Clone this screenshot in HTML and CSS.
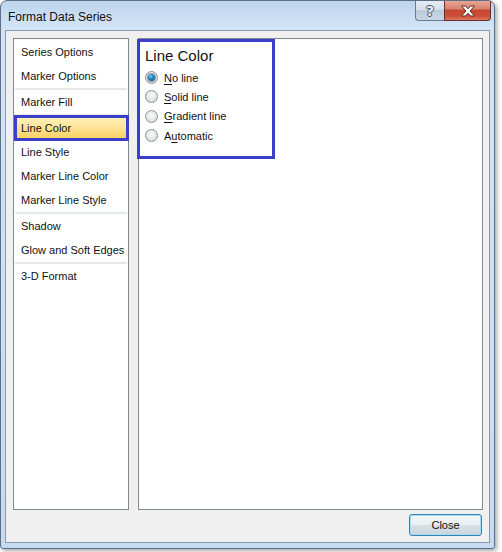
FILE: index.html
```html
<!DOCTYPE html>
<html>
<head>
<meta charset="utf-8">
<title>Format Data Series</title>
<link rel="stylesheet" href="styles.css">
</head>
<body>
<div class="window">
  <div class="titlebar">
    <span class="title">Format Data Series</span>
    <div class="caption-btns">
      <div class="cbtn help"><span class="qmark">?</span></div>
      <div class="cbtn close">
        <svg width="16" height="12" viewBox="0 0 16 12">
          <path d="M1.5 1h4l2.5 2.8L10.5 1h4l-4.5 5 4.5 5h-4L8 8.2 5.5 11h-4L6 6z" fill="#ffffff" stroke="#5a2a22" stroke-width="1" stroke-linejoin="round"/>
        </svg>
      </div>
    </div>
  </div>
  <div class="client">
    <div class="panes">
      <div class="nav">
        <div class="nav-item">Series Options</div>
        <div class="nav-item">Marker Options</div>
        <div class="nav-sep"></div>
        <div class="nav-item">Marker Fill</div>
        <div class="nav-sep"></div>
        <div class="nav-item selected">Line Color</div>
        <div class="nav-item">Line Style</div>
        <div class="nav-item">Marker Line Color</div>
        <div class="nav-item">Marker Line Style</div>
        <div class="nav-sep"></div>
        <div class="nav-item">Shadow</div>
        <div class="nav-item">Glow and Soft Edges</div>
        <div class="nav-sep"></div>
        <div class="nav-item">3-D Format</div>
      </div>
      <div class="content">
        <div class="group">
          <div class="heading">Line Color</div>
          <div class="radios">
            <div class="radio-row"><span class="radio checked"></span><span class="label"><u>N</u>o line</span></div>
            <div class="radio-row"><span class="radio"></span><span class="label"><u>S</u>olid line</span></div>
            <div class="radio-row"><span class="radio"></span><span class="label"><u>G</u>radient line</span></div>
            <div class="radio-row"><span class="radio"></span><span class="label">A<u>u</u>tomatic</span></div>
          </div>
        </div>
      </div>
    </div>
    <div class="footer">
      <button class="btn">Close</button>
    </div>
  </div>
</div>
</body>
</html>
```

FILE: styles.css
```css
* {
  box-sizing: border-box;
}

html, body {
  margin: 0;
  padding: 0;
}

body {
  background: #ffffff;
  width: 502px;
  height: 552px;
  overflow: hidden;
  font-family: "Liberation Sans", Arial, sans-serif;
  font-size: 11px;
  color: #000;
}

.window {
  width: 495px;
  height: 549px;
  border: 1px solid #5f6f84;
  border-radius: 7px 7px 3px 3px;
  background: linear-gradient(180deg, #bcd4ee 0px, #c9ddf3 14px, #d3e4f6 29px, #c6dbf2 100%);
  box-shadow: 2px 2px 4px rgba(0, 0, 0, 0.35);
  padding: 0 4px 5px 4px;
  display: flex;
  flex-direction: column;
}

.titlebar {
  height: 29px;
  display: flex;
  align-items: flex-start;
}

.title {
  font-size: 12px;
  color: #111;
  padding: 9px 0 0 3px;
  line-height: 14px;
}

.caption-btns {
  margin-left: auto;
  margin-right: -1px;
  display: flex;
  height: 20px;
}

.cbtn {
  height: 20px;
  display: flex;
  align-items: center;
  justify-content: center;
  border: 1px solid #6b7a8e;
  border-top: none;
}

.help {
  width: 29px;
  border-right: none;
  border-radius: 0 0 0 4px;
  background: linear-gradient(180deg, #e4ecf5 0%, #d4e0ec 45%, #bccbdc 50%, #c9d7e6 100%);
}

.qmark {
  font-family: "DejaVu Sans", sans-serif;
  font-weight: bold;
  font-size: 14px;
  line-height: 14px;
  color: #eef1f4;
  text-shadow: -1px 0 #48525e, 1px 0 #48525e, 0 -1px #48525e, 0 1px #48525e;
}

.close {
  width: 47px;
  border-color: #6a3027;
  border-radius: 0 0 4px 0;
  background: linear-gradient(180deg, #e8a596 0%, #d98371 40%, #c7452f 50%, #cc5038 80%, #dc7a62 100%);
}

.client {
  flex: 1;
  background: #f0f0f0;
  border: 1px solid #8a9bb0;
  padding: 7px 6px 6px 7px;
  display: flex;
  flex-direction: column;
}

.panes {
  height: 472px;
  display: flex;
  gap: 9px;
}

.nav {
  width: 116px;
  background: #fff;
  border: 1px solid #828790;
  padding-top: 1px;
}

.nav-item {
  height: 24px;
  line-height: 24px;
  padding-left: 7px;
  white-space: nowrap;
  color: #111;
}

.nav-sep {
  height: 2px;
  margin: 0 1px;
  background: #e6e9ec;
}

.nav-item.selected {
  height: 26px;
  line-height: 20px;
  margin: -1px -1px -1px 0;
  padding-left: 4px;
  border: 3px solid #3b3fcc;
  background: linear-gradient(180deg, #fff1b8 0%, #fee59a 45%, #fcd873 80%, #fbd267 100%);
}

.content {
  flex: 1;
  background: #fff;
  border: 1px solid #828790;
}

.group {
  width: 138px;
  height: 120px;
  margin-left: -2px;
  border: 3px solid #3b3fcc;
  padding: 4px 0 0 5px;
}

.heading {
  font-size: 15px;
  line-height: 20px;
  color: #141414;
}

.radios {
  padding-top: 2px;
}

.radio-row {
  height: 19.33px;
  display: flex;
  align-items: center;
}

.radio {
  width: 13px;
  height: 13px;
  border-radius: 50%;
  border: 1px solid #8d9399;
  background: radial-gradient(circle at 50% 40%, #fbfbfb 0%, #eaeaea 45%, #cfcfcf 100%);
  margin-right: 6px;
  display: flex;
  align-items: center;
  justify-content: center;
  flex: none;
}

.radio.checked::after {
  content: "";
  width: 7px;
  height: 7px;
  border-radius: 50%;
  background: radial-gradient(circle at 40% 35%, #7fd0f5 0%, #1c86c4 40%, #0a4876 100%);
  box-shadow: 0 0 0 1px rgba(20, 50, 80, 0.45);
}

.label {
  color: #111;
  line-height: 14px;
}

.label u {
  text-decoration-thickness: 1px;
  text-underline-offset: 2px;
}

.footer {
  margin-top: 4px;
  display: flex;
  justify-content: flex-end;
}

.btn {
  width: 73px;
  height: 22px;
  margin-right: 1px;
  font-family: "Liberation Sans", Arial, sans-serif;
  font-size: 11px;
  color: #111;
  border: 1px solid #3c7fb1;
  border-radius: 3px;
  background: linear-gradient(180deg, #f4f7f9 0%, #e8eef2 48%, #d9e0e5 52%, #ccd5dc 100%);
  box-shadow: inset 0 0 0 1px #9ee2f8;
  padding: 0;
}
```
